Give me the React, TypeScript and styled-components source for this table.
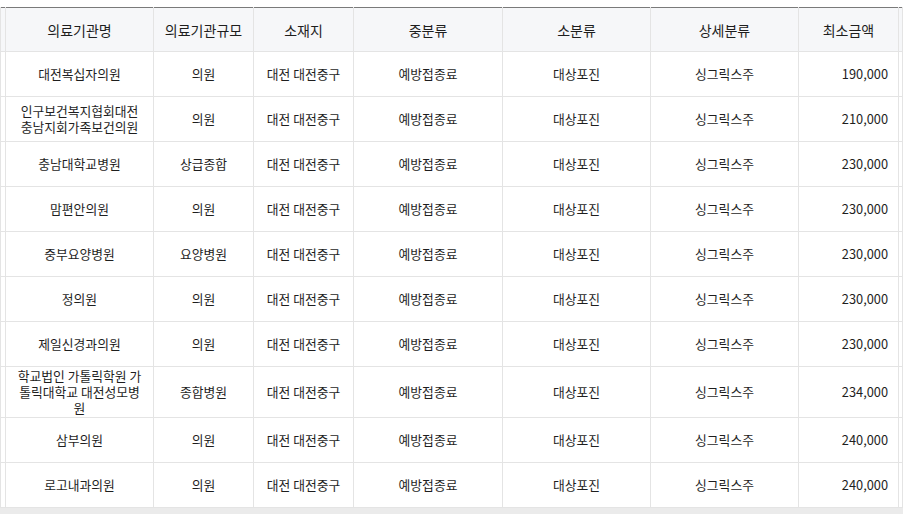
import React from 'react';
import styled, { createGlobalStyle } from 'styled-components';

const GlobalStyle = createGlobalStyle`
  html, body {
    margin: 0;
    padding: 0;
    background: #fff;
  }
  body {
    font-family: "Noto Sans CJK KR", "Noto Sans", sans-serif;
    color: #1e1e1e;
    overflow: hidden;
  }
`;

const Page = styled.div`
  padding-top: 7px;
  width: 903px;
  height: 514px;
  overflow: hidden;
  display: flex;
  flex-direction: column;
`;

const Table = styled.table`
  width: 100%;
  border-collapse: collapse;
  table-layout: fixed;
  border-top: 1px solid #7a7a7a;
`;

const HeadCell = styled.th`
  height: 43px;
  padding: 0 4px;
  background: #f6f7f9;
  border: 1px solid #e4e4e4;
  border-top: none;
  font-size: 14px;
  font-weight: 400;
  color: #1e1e1e;
  text-align: center;
  vertical-align: middle;
`;

const Row = styled.tr`
  height: 45px;
`;

const Cell = styled.td<{ $align?: 'center' | 'right' }>`
  padding: 1px ${(p) => (p.$align === 'right' ? '10px' : '11px')} 1px 11px;
  border: 1px solid #e4e4e4;
  font-size: 12.8px;
  line-height: 16px;
  text-align: ${(p) => p.$align ?? 'center'};
  vertical-align: middle;
  word-break: break-all;
`;

const EdgeCell = styled.td`
  padding: 0;
  border: 1px solid #e4e4e4;
`;

const ScrollTrack = styled.div`
  flex: 1;
  background: #ebebeb;
`;

const columns = [
  { label: '의료기관명', width: 148 },
  { label: '의료기관규모', width: 100 },
  { label: '소재지', width: 100 },
  { label: '중분류', width: 149 },
  { label: '소분류', width: 148 },
  { label: '상세분류', width: 148 },
  { label: '최소금액', width: 100 },
];

type Item = { name: string; size: string; price: string };

const items: Item[] = [
  { name: '대전복십자의원', size: '의원', price: '190,000' },
  { name: '인구보건복지협회대전충남지회가족보건의원', size: '의원', price: '210,000' },
  { name: '충남대학교병원', size: '상급종합', price: '230,000' },
  { name: '맘편안의원', size: '의원', price: '230,000' },
  { name: '중부요양병원', size: '요양병원', price: '230,000' },
  { name: '정의원', size: '의원', price: '230,000' },
  { name: '제일신경과의원', size: '의원', price: '230,000' },
  { name: '학교법인 가톨릭학원 가톨릭대학교 대전성모병원', size: '종합병원', price: '234,000' },
  { name: '삼부의원', size: '의원', price: '240,000' },
  { name: '로고내과의원', size: '의원', price: '240,000' },
];

export default function App() {
  return (
    <>
      <GlobalStyle />
      <Page>
        <Table>
          <colgroup>
            <col style={{ width: 5 }} />
            {columns.map((c) => (
              <col key={c.label} style={{ width: c.width }} />
            ))}
            <col />
          </colgroup>
          <thead>
            <tr>
              <HeadCell />
              {columns.map((c) => (
                <HeadCell key={c.label}>{c.label}</HeadCell>
              ))}
              <HeadCell />
            </tr>
          </thead>
          <tbody>
            {items.map((it, i) => (
              <Row key={i}>
                <EdgeCell />
                <Cell>{it.name}</Cell>
                <Cell>{it.size}</Cell>
                <Cell>대전 대전중구</Cell>
                <Cell>예방접종료</Cell>
                <Cell>대상포진</Cell>
                <Cell>싱그릭스주</Cell>
                <Cell $align="right">{it.price}</Cell>
                <EdgeCell />
              </Row>
            ))}
          </tbody>
        </Table>
        <ScrollTrack />
      </Page>
    </>
  );
}
